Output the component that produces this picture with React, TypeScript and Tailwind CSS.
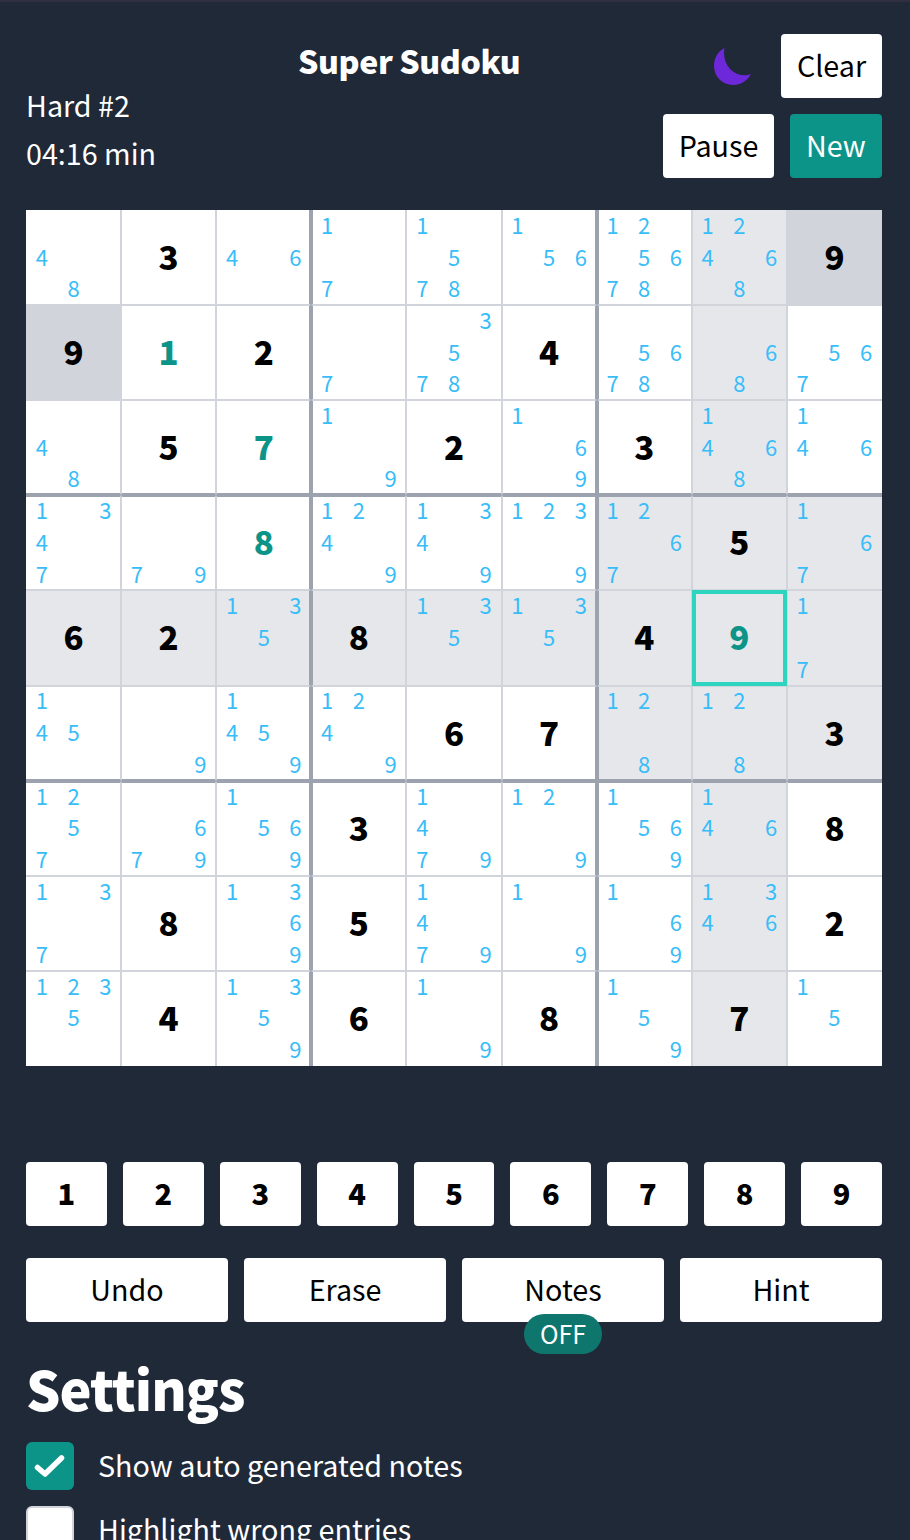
type Cell = { v?: number; teal?: boolean; notes?: number[] };

const n = (...notes: number[]): Cell => ({ notes });
const g = (v: number): Cell => ({ v });
const t = (v: number): Cell => ({ v, teal: true });

const rows: Cell[][] = [
  [n(4, 8), g(3), n(4, 6), n(1, 7), n(1, 5, 7, 8), n(1, 5, 6), n(1, 2, 5, 6, 7, 8), n(1, 2, 4, 6, 8), g(9)],
  [g(9), t(1), g(2), n(7), n(3, 5, 7, 8), g(4), n(5, 6, 7, 8), n(6, 8), n(5, 6, 7)],
  [n(4, 8), g(5), t(7), n(1, 9), g(2), n(1, 6, 9), g(3), n(1, 4, 6, 8), n(1, 4, 6)],
  [n(1, 3, 4, 7), n(7, 9), t(8), n(1, 2, 4, 9), n(1, 3, 4, 9), n(1, 2, 3, 9), n(1, 2, 6, 7), g(5), n(1, 6, 7)],
  [g(6), g(2), n(1, 3, 5), g(8), n(1, 3, 5), n(1, 3, 5), g(4), t(9), n(1, 7)],
  [n(1, 4, 5), n(9), n(1, 4, 5, 9), n(1, 2, 4, 9), g(6), g(7), n(1, 2, 8), n(1, 2, 8), g(3)],
  [n(1, 2, 5, 7), n(6, 7, 9), n(1, 5, 6, 9), g(3), n(1, 4, 7, 9), n(1, 2, 9), n(1, 5, 6, 9), n(1, 4, 6), g(8)],
  [n(1, 3, 7), g(8), n(1, 3, 6, 9), g(5), n(1, 4, 7, 9), n(1, 9), n(1, 6, 9), n(1, 3, 4, 6), g(2)],
  [n(1, 2, 3, 5), g(4), n(1, 3, 5, 9), g(6), n(1, 9), g(8), n(1, 5, 9), g(7), n(1, 5)],
];

const DIGITS = [1, 2, 3, 4, 5, 6, 7, 8, 9];

function cellBg(r: number, c: number, cell: Cell) {
  if (cell.v === 9 && !cell.teal) return "bg-[#d1d5db]";
  if (r === 4 || c === 7) return "bg-[#e5e7eb]";
  if (r >= 3 && r <= 5 && c >= 6) return "bg-[#e5e7eb]";
  return "bg-white";
}

// grid lines sit on top of the cell so the notes stay centred
function lineClasses(r: number, c: number) {
  const left = c === 0 ? "" : c % 3 === 0 ? "border-l-2 border-l-[#9ca3af]" : "border-l border-l-[#d1d5db]";
  const right = c === 8 ? "" : c % 3 === 2 ? "border-r-2 border-r-[#9ca3af]" : "border-r border-r-[#d1d5db]";
  const top = r === 0 ? "" : r % 3 === 0 ? "border-t-2 border-t-[#9ca3af]" : "border-t border-t-[#d1d5db]";
  const bottom = r === 8 ? "" : r % 3 === 2 ? "border-b-2 border-b-[#9ca3af]" : "border-b border-b-[#d1d5db]";
  return `${left} ${right} ${top} ${bottom}`;
}

function GridCell({ cell, r, c }: { cell: Cell; r: number; c: number }) {
  const active = r === 4 && c === 7;
  return (
    <div className={`relative flex items-center justify-center ${cellBg(r, c, cell)}`}>
      {cell.notes ? (
        <div className="grid h-full w-full grid-cols-3 grid-rows-3">
          {DIGITS.map((d) => (
            <div key={d} className="flex items-center justify-center pb-[4px] text-[22px] leading-none text-[#38bdf8]">
              {cell.notes!.includes(d) ? d : ""}
            </div>
          ))}
        </div>
      ) : (
        <span className={`pb-[2px] text-[33px] leading-none font-black ${cell.teal ? "text-[#0d9488]" : "text-black"}`}>{cell.v}</span>
      )}
      <div className={`absolute inset-0 ${active ? "border-4 border-[#2dd4bf]" : lineClasses(r, c)}`} />
    </div>
  );
}

export default function App() {
  return (
    <div className="h-[1540px] w-[910px] overflow-hidden border-t-2 border-[#2f2f3f] bg-[#1f2937] pr-[28px] pl-[26px] font-['Noto_Sans_CJK_JP','Noto_Sans',sans-serif]">
      {/* Header */}
      <div className="flex h-[208px] items-start pt-8">
        <div className="w-[272px] pt-[47px] text-[28.7px] leading-[48px] text-white">
          <div>Hard #2</div>
          <div>04:16 min</div>
        </div>
        <h1 className="mt-[6px] text-[32px] leading-[40px] font-black tracking-[-0.4px] text-white">Super Sudoku</h1>
        <div className="ml-auto flex flex-col items-end gap-4">
          <div className="flex items-center gap-[30px]">
            <svg width="37" height="37" viewBox="0 0 37 37">
              <path d="M10.5 0C3.5 3.5 0 10.5 0 18C0 28.5 8.5 37 19 37C27 37 33.5 32.5 37 26C31 28.5 23 27.5 17 22C11 16 9 7 10.5 0Z" fill="#6d28d9" />
            </svg>
            <button className="h-16 w-[101px] rounded bg-white pb-[2px] text-[28.7px] text-black">Clear</button>
          </div>
          <div className="flex gap-4">
            <button className="h-16 w-[111px] rounded bg-white pb-[2px] text-[28.7px] text-black">Pause</button>
            <button className="h-16 w-[92px] rounded bg-[#0d9488] pb-[2px] text-[28.7px] text-white">New</button>
          </div>
        </div>
      </div>

      {/* Board */}
      <div className="grid h-[856px] w-[856px] grid-cols-9 grid-rows-9">
        {rows.map((row, r) => row.map((cell, c) => <GridCell key={`${r}-${c}`} cell={cell} r={r} c={c} />))}
      </div>

      {/* Number pad */}
      <div className="mt-24 flex gap-4">
        {DIGITS.map((d) => (
          <button key={d} className="h-16 flex-1 rounded bg-white pb-[2px] text-[29px] font-black text-black">{d}</button>
        ))}
      </div>

      {/* Controls */}
      <div className="mt-8 grid grid-cols-4 gap-4">
        {["Undo", "Erase", "Notes", "Hint"].map((label) => (
          <button key={label} className="relative h-16 rounded bg-white pb-[2px] text-[28.7px] text-black">
            {label}
            {label === "Notes" && (
              <span className="absolute top-[56px] left-[62px] flex h-10 w-[78px] items-center justify-center rounded-full bg-[#0f766e] text-[25px] text-white">OFF</span>
            )}
          </button>
        ))}
      </div>

      {/* Settings */}
      <h2 className="mt-[30px] text-[54px] leading-[72px] font-black tracking-[-1px] text-white">Settings</h2>
      <div className="mt-[18px] flex items-center gap-6">
        <span className="h-12 w-12 rounded-md bg-[#0d9488]">
          <svg width="48" height="48" viewBox="0 0 48 48">
            <path d="M11.5 25.5L19 32L35.5 16" fill="none" stroke="#fff" strokeWidth="5.5" strokeLinecap="round" strokeLinejoin="round" />
          </svg>
        </span>
        <span className="pb-[2px] text-[28.7px] leading-[46px] text-white">Show auto generated notes</span>
      </div>
      <div className="mt-4 flex items-center gap-6">
        <span className="h-12 w-12 rounded-md border-2 border-[#d1d5db] bg-white" />
        <span className="pb-[2px] text-[28.7px] leading-[46px] text-white">Highlight wrong entries</span>
      </div>
    </div>
  );
}
